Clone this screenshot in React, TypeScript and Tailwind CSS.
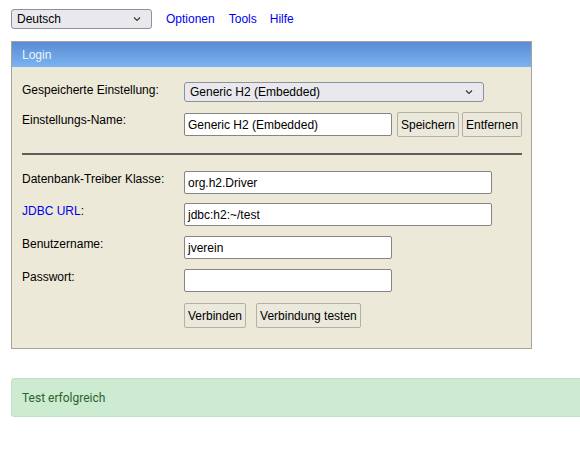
import React from "react";

function Chevron() {
  return (
    <svg width="8" height="5" viewBox="0 0 8 5" className="absolute right-[10px] top-1/2 -translate-y-1/2">
      <path d="M1 1 L4 4 L7 1" fill="none" stroke="#333" strokeWidth="1.1" />
    </svg>
  );
}

function Select({ value, className }: { value: string; className: string }) {
  return (
    <div
      className={
        "relative flex items-center h-[20px] rounded-[3px] border border-[#8f8f9d] bg-[#e9e9ed] pl-[5px] text-[12px] text-black " +
        className
      }
    >
      {value}
      <Chevron />
    </div>
  );
}

function Input({ value, w }: { value: string; w: string }) {
  return (
    <div
      className={
        "flex items-center h-[23px] rounded-[2px] border border-[#858585] bg-white pl-[3px] text-[12px] text-black " + w
      }
    >
      {value}
    </div>
  );
}

function Btn({ label }: { label: string }) {
  return (
    <div className="flex items-center h-[25px] px-[3px] rounded-[2px] border border-[#b3b0a5] bg-[#ebe8dc] text-[12px] text-black">
      {label}
    </div>
  );
}

function Label({ children }: { children: React.ReactNode }) {
  return <div className="w-[162px] shrink-0 leading-[14px] pt-[1px]">{children}</div>;
}

export default function App() {
  return (
    <div className="w-full h-[455px] overflow-hidden bg-white text-[12px] text-black" style={{ fontFamily: '"Liberation Sans", Arial, sans-serif' }}>
      <div className="flex items-center pt-[9px] pl-[11px]">
        <Select value="Deutsch" className="w-[141px]" />
        <a className="ml-[14px] text-[#0000ee]">Optionen</a>
        <a className="ml-[14px] text-[#0000ee]">Tools</a>
        <a className="ml-[13px] text-[#0000ee]">Hilfe</a>
      </div>

      <div className="ml-[11px] mt-[12px] w-[521px] h-[308px] border border-[#a8a597] bg-[#ece9d8]">
        <div className="h-[25px] flex items-center pl-[10px] text-[#eef3fb] bg-gradient-to-b from-[#5a8cd4] to-[#7ab4f0]">
          Login
        </div>
        <div className="pl-[10px] pr-[9px]">
          <div className="flex items-start mt-[15px]">
            <Label>Gespeicherte Einstellung:</Label>
            <Select value="Generic H2 (Embedded)" className="w-[300px]" />
          </div>
          <div className="flex items-start mt-[10px]">
            <Label>Einstellungs-Name:</Label>
            <div className="flex items-center gap-[3px]">
              <div className="mr-[2px]">
                <Input value="Generic H2 (Embedded)" w="w-[208px]" />
              </div>
              <Btn label="Speichern" />
              <Btn label="Entfernen" />
            </div>
          </div>
          <div className="mt-[16px] h-[2px] bg-[#5e5e5e]" />
          <div className="flex items-start mt-[16px]">
            <Label>Datenbank-Treiber Klasse:</Label>
            <Input value="org.h2.Driver" w="w-[308px]" />
          </div>
          <div className="flex items-start mt-[9px]">
            <Label>
              <span className="text-[#0000ee]">JDBC URL</span>:
            </Label>
            <Input value="jdbc:h2:~/test" w="w-[308px]" />
          </div>
          <div className="flex items-start mt-[10px]">
            <Label>Benutzername:</Label>
            <Input value="jverein" w="w-[208px]" />
          </div>
          <div className="flex items-start mt-[10px]">
            <Label>Passwort:</Label>
            <Input value="" w="w-[208px]" />
          </div>
          <div className="flex items-start mt-[11px] pl-[162px] gap-[10px]">
            <Btn label="Verbinden" />
            <Btn label="Verbindung testen" />
          </div>
        </div>
      </div>

      <div
        className="ml-[11px] mr-[-20px] mt-[29px] h-[39px] flex items-center pl-[10px] rounded-[3px] border border-[#bfe2c4] bg-[#cdebd0] text-[#2a632e] text-[12px]"
        style={{ fontFamily: 'Roboto, "Liberation Sans", sans-serif' }}
      >
        Test erfolgreich
      </div>
    </div>
  );
}
